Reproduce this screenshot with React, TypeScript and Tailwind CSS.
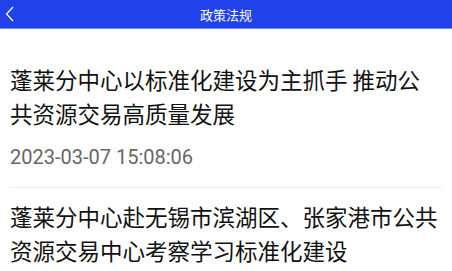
import React from "react";

const articles = [
  {
    title: "蓬莱分中心以标准化建设为主抓手 推动公共资源交易高质量发展",
    date: "2023-03-07 15:08:06",
  },
  {
    title: "蓬莱分中心赴无锡市滨湖区、张家港市公共资源交易中心考察学习标准化建设",
    date: "2023-03-06 10:21:44",
  },
];

const App: React.FC = () => {
  return (
    <div className="min-h-screen bg-white font-['Noto_Sans_CJK_SC',sans-serif]">
      {/* header */}
      <div className="relative flex h-[29px] items-center justify-center border-b border-[#6f8af2] bg-[#2141ea]">
        <button type="button" className="absolute left-[3px] top-[5px] text-white">
          <svg width="14" height="18" viewBox="0 0 14 18" fill="none">
            <path d="M10 2 L3.5 9 L10 16" stroke="white" strokeWidth="1.3" />
          </svg>
        </button>
        <h1 className="text-[13px] leading-none text-white">政策法规</h1>
      </div>

      {/* list */}
      <div className="px-[10px] pt-[21px]">
        {articles.map((item, index) => (
          <div key={index} className="border-b border-[#f0f0f0] pb-[17px] pt-[11px] first:pt-[12px]">
            <h2 className="text-[22.5px] leading-[34px] text-[#111]">{item.title}</h2>
            <p className="mt-[14px] font-['Roboto',sans-serif] text-[20px] leading-[26px] text-[#666]">
              {item.date}
            </p>
          </div>
        ))}
      </div>
    </div>
  );
};

export default App;
